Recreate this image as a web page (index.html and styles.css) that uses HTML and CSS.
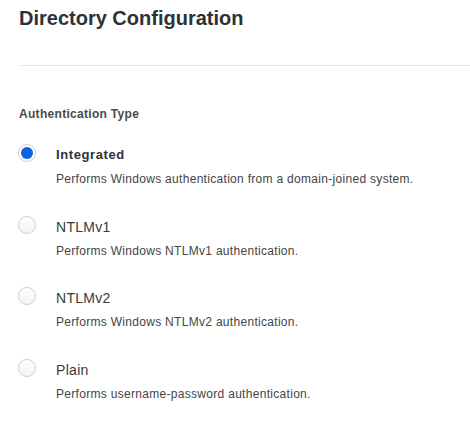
FILE: index.html
```html
<!DOCTYPE html>
<html>
<head>
<meta charset="utf-8">
<link rel="stylesheet" href="styles.css">
</head>
<body>
<div class="page">
  <h1 class="title">Directory Configuration</h1>
  <hr class="sep">
  <div class="section-label">Authentication Type</div>
  <div class="options">
    <div class="option">
      <span class="radio checked"></span>
      <div class="text">
        <div class="name selected">Integrated</div>
        <div class="desc">Performs Windows authentication from a domain-joined system.</div>
      </div>
    </div>
    <div class="option">
      <span class="radio"></span>
      <div class="text">
        <div class="name">NTLMv1</div>
        <div class="desc">Performs Windows NTLMv1 authentication.</div>
      </div>
    </div>
    <div class="option">
      <span class="radio"></span>
      <div class="text">
        <div class="name">NTLMv2</div>
        <div class="desc">Performs Windows NTLMv2 authentication.</div>
      </div>
    </div>
    <div class="option">
      <span class="radio"></span>
      <div class="text">
        <div class="name">Plain</div>
        <div class="desc">Performs username-password authentication.</div>
      </div>
    </div>
  </div>
</div>
</body>
</html>
```

FILE: styles.css
```css
html, body {
  margin: 0;
  padding: 0;
  background: #fff;
}
body {
  font-family: "Liberation Sans", Arial, sans-serif;
  color: #333;
}
.page {
  padding: 4px 0 0 19px;
}
.title {
  margin: 0;
  font-size: 20px;
  font-weight: bold;
  line-height: 28px;
  color: #2d3238;
}
.sep {
  margin: 33px 0 0 0;
  border: 0;
  border-top: 1px solid #e6e9ec;
  height: 0;
}
.section-label {
  margin-top: 40px;
  font-size: 12px;
  letter-spacing: 0.3px;
  font-weight: bold;
  color: #4a4a4a;
  line-height: 16px;
}
.options {
  margin-top: 25px;
  display: flex;
  flex-direction: column;
  gap: 31.5px;
}
.option {
  display: flex;
  align-items: flex-start;
  gap: 20px;
}
.radio {
  flex: none;
  width: 16px;
  height: 16px;
  margin: -3px 0 0 -1px;
  border: 1px solid #cfcfcf;
  border-radius: 50%;
  background: linear-gradient(#fff, #f3f3f3);
  position: relative;
}
.radio.checked {
  background: #fff;
}
.radio.checked::after {
  content: "";
  position: absolute;
  left: 2px;
  top: 2px;
  width: 12px;
  height: 12px;
  border-radius: 50%;
  background: #0a63e6;
}
.name {
  font-size: 14px;
  letter-spacing: 0.3px;
  line-height: 16px;
  color: #3a3a3a;
}
.name.selected {
  font-weight: bold;
  font-size: 13px;
  letter-spacing: 0.6px;
  color: #2f3237;
}
.desc {
  margin-top: 8px;
  font-size: 12px;
  letter-spacing: 0.3px;
  line-height: 16px;
  color: #444;
}
```
